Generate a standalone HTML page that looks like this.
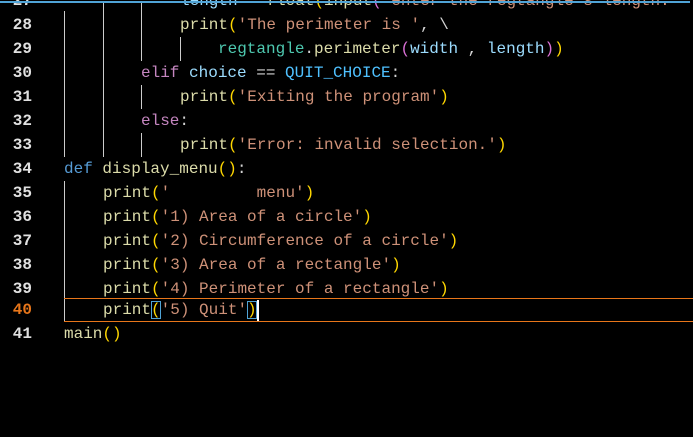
<!DOCTYPE html>
<html><head><style>
html,body{margin:0;padding:0;background:#000;width:693px;height:437px;overflow:hidden}
.l{position:absolute;left:0;height:24px;line-height:24px;font-family:"Liberation Mono",monospace;font-size:16px;white-space:pre;color:#d4d4d4}
.n{position:absolute;left:0;width:32px;text-align:right;color:#e0e0e0;font-weight:bold}
.c{position:absolute;left:64px}
.g{position:absolute;width:1px;background:#ccc}
.f{color:#dcdcaa}.s{color:#ce9178}.p{color:#ffd700}.q{color:#da70d6}.k{color:#569cd6}.m{color:#c586c0}.v{color:#9cdcfe}.o{color:#4fc1ff}.t{color:#4ec9b0}
</style></head><body>
<div class="g" style="left:64px;top:11px;height:146px"></div>
<div class="g" style="left:103px;top:3px;height:154px"></div>
<div class="g" style="left:141px;top:3px;height:58px"></div>
<div class="g" style="left:141px;top:85px;height:24px"></div>
<div class="g" style="left:141px;top:133px;height:24px"></div>
<div class="g" style="left:180px;top:37px;height:24px"></div>
<div class="g" style="left:64px;top:181px;height:140px"></div>
<div style="position:absolute;left:64px;top:298px;width:629px;height:22px;border-top:1px solid #e8761a;border-bottom:1px solid #e8761a"></div>

<div class="l" style="top:-11px"><span class="n">27</span><span class="c" style="left:180px"><span class="v">length</span> = <span class="f">float</span><span class="p">(</span><span class="f">input</span><span class="q">(</span><span class="s">'enter the regtangle's length: '</span></span></div>
<div style="position:absolute;left:0;top:1px;width:690px;height:2px;background:#4fa3d6"></div>
<div class="l" style="top:13px"><span class="n">28</span><span class="c" style="left:180px"><span class="f">print</span><span class="p">(</span><span class="s">'The perimeter is '</span>, \</span></div>
<div class="l" style="top:37px"><span class="n">29</span><span class="c" style="left:218px"><span class="t">regtangle</span>.<span class="f">perimeter</span><span class="q">(</span><span class="v">width</span> , <span class="v">length</span><span class="q">)</span><span class="p">)</span></span></div>
<div class="l" style="top:61px"><span class="n">30</span><span class="c" style="left:141px"><span class="m">elif</span> <span class="v">choice</span> == <span class="o">QUIT_CHOICE</span>:</span></div>
<div class="l" style="top:85px"><span class="n">31</span><span class="c" style="left:180px"><span class="f">print</span><span class="p">(</span><span class="s">'Exiting the program'</span><span class="p">)</span></span></div>
<div class="l" style="top:109px"><span class="n">32</span><span class="c" style="left:141px"><span class="m">else</span>:</span></div>
<div class="l" style="top:133px"><span class="n">33</span><span class="c" style="left:180px"><span class="f">print</span><span class="p">(</span><span class="s">'Error: invalid selection.'</span><span class="p">)</span></span></div>
<div class="l" style="top:157px"><span class="n">34</span><span class="c"><span class="k">def</span> <span class="f">display_menu</span><span class="p">()</span>:</span></div>
<div class="l" style="top:181px"><span class="n">35</span><span class="c" style="left:103px"><span class="f">print</span><span class="p">(</span><span class="s">'         menu'</span><span class="p">)</span></span></div>
<div class="l" style="top:205px"><span class="n">36</span><span class="c" style="left:103px"><span class="f">print</span><span class="p">(</span><span class="s">'1) Area of a circle'</span><span class="p">)</span></span></div>
<div class="l" style="top:229px"><span class="n">37</span><span class="c" style="left:103px"><span class="f">print</span><span class="p">(</span><span class="s">'2) Circumference of a circle'</span><span class="p">)</span></span></div>
<div class="l" style="top:253px"><span class="n">38</span><span class="c" style="left:103px"><span class="f">print</span><span class="p">(</span><span class="s">'3) Area of a rectangle'</span><span class="p">)</span></span></div>
<div class="l" style="top:277px"><span class="n">39</span><span class="c" style="left:103px"><span class="f">print</span><span class="p">(</span><span class="s">'4) Perimeter of a rectangle'</span><span class="p">)</span></span></div>
<div class="l" style="top:298px"><span class="n" style="color:#e8761a">40</span><span class="c" style="left:103px"><span class="f">print</span><span class="p" style="outline:1px solid #4fa3d6;outline-offset:-1px">(</span><span class="s">'5) Quit'</span><span class="p" style="outline:1px solid #4fa3d6;outline-offset:-1px">)</span></span></div>
<div style="position:absolute;left:257px;top:300px;width:2px;height:21px;background:#fff"></div>
<div class="l" style="top:322px"><span class="n">41</span><span class="c"><span class="f">main</span><span class="p">()</span></span></div>
</body></html>
